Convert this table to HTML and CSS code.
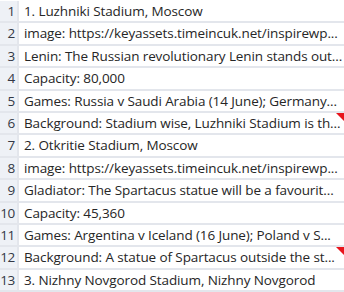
FILE: index.html
```html
<!DOCTYPE html>
<html>
<head>
<meta charset="utf-8">
<link rel="stylesheet" href="styles.css">
</head>
<body>
<div class="sheet">
  <div class="row"><div class="num">1</div><div class="cell">1. Luzhniki Stadium, Moscow</div></div>
  <div class="row"><div class="num">2</div><div class="cell">image: https://keyassets.timeincuk.net/inspirewp...</div></div>
  <div class="row"><div class="num">3</div><div class="cell">Lenin: The Russian revolutionary Lenin stands out...</div></div>
  <div class="row"><div class="num">4</div><div class="cell">Capacity: 80,000</div></div>
  <div class="row"><div class="num">5</div><div class="cell">Games: Russia v Saudi Arabia (14 June); Germany...</div></div>
  <div class="row"><div class="num">6</div><div class="cell note">Background: Stadium wise, Luzhniki Stadium is th...</div></div>
  <div class="row"><div class="num">7</div><div class="cell">2. Otkritie Stadium, Moscow</div></div>
  <div class="row"><div class="num">8</div><div class="cell">image: https://keyassets.timeincuk.net/inspirewp...</div></div>
  <div class="row"><div class="num">9</div><div class="cell">Gladiator: The Spartacus statue will be a favourit...</div></div>
  <div class="row"><div class="num">10</div><div class="cell">Capacity: 45,360</div></div>
  <div class="row"><div class="num">11</div><div class="cell">Games: Argentina v Iceland (16 June); Poland v S...</div></div>
  <div class="row"><div class="num">12</div><div class="cell note">Background: A statue of Spartacus outside the st...</div></div>
  <div class="row"><div class="num">13</div><div class="cell">3. Nizhny Novgorod Stadium, Nizhny Novgorod</div></div>
</div>
</body>
</html>
```
FILE: styles.css
```css
html, body {
  margin: 0;
  padding: 0;
  background: #ffffff;
}
.sheet {
  width: 344px;
  height: 292px;
  overflow: hidden;
  font-family: "Open Sans", "Noto Sans", sans-serif;
  font-size: 13.5px;
  color: #262626;
  padding-top: 1px;
}
.row {
  display: flex;
  height: 22.4px;
  box-sizing: border-box;
  border-bottom: 2px solid #e3e6ec;
}
.num {
  flex: 0 0 19px;
  background: #eef1f6;
  border-right: 2px solid #e3e6ec;
  text-align: right;
  padding-right: 2px;
  box-sizing: border-box;
  line-height: 20px;
  color: #333845;
  white-space: nowrap;
  letter-spacing: -0.3px;
}
.cell {
  flex: 1;
  min-width: 0;
  position: relative;
  padding: 0 0 0 5px;
  line-height: 20px;
  white-space: nowrap;
  overflow: hidden;
  letter-spacing: -0.1px;
}
.note::after {
  content: "";
  position: absolute;
  top: 0;
  right: 0;
  border-top: 8px solid #e8141c;
  border-left: 8px solid transparent;
}
```
